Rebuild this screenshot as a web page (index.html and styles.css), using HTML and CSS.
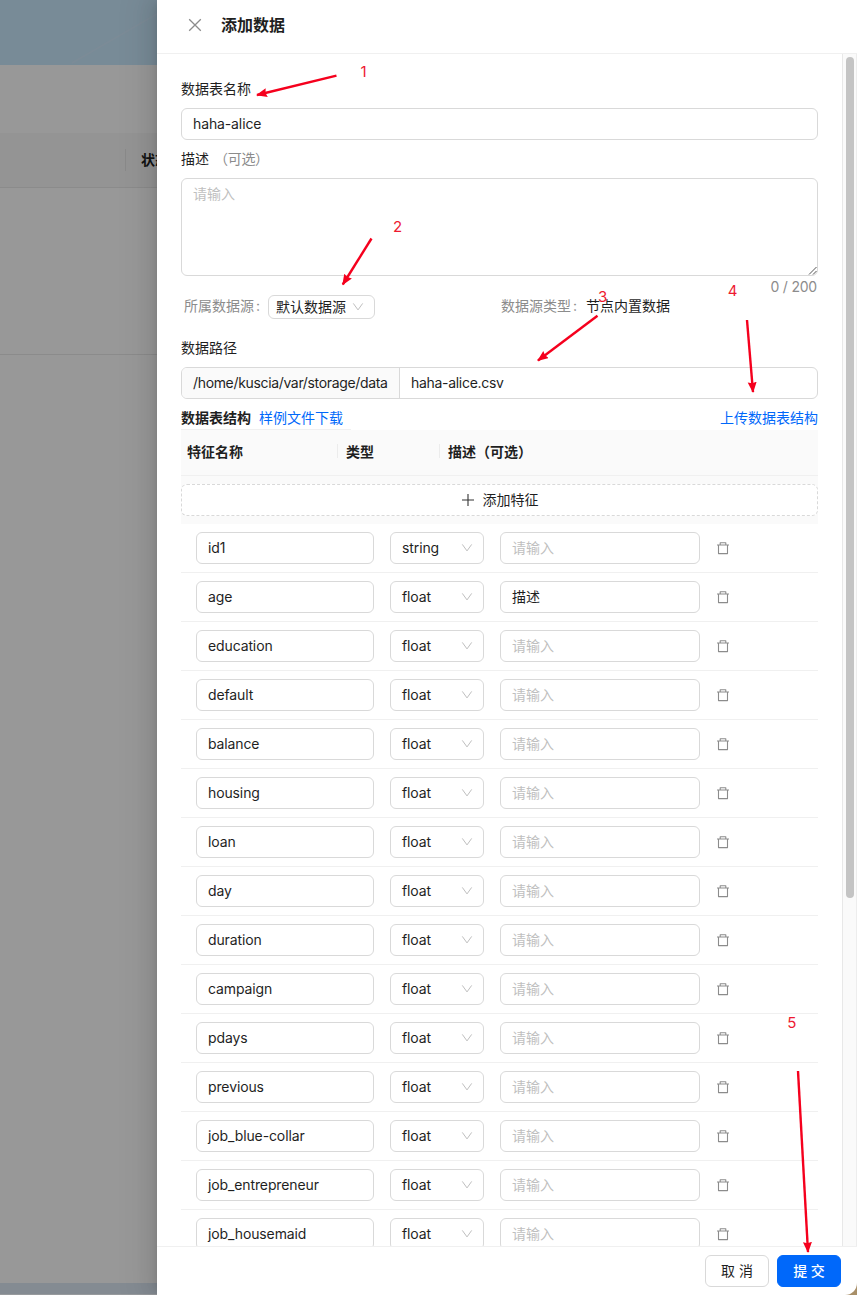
FILE: index.html
```html
<!DOCTYPE html>
<html lang="zh-CN">
<head>
<meta charset="utf-8">
<title>添加数据</title>
<link rel="stylesheet" href="styles.css">
</head>
<body>
<div class="screen">
  <aside class="backdrop">
    <div class="banner"><svg class="banner-line" width="157" height="65" viewBox="0 0 157 65"><path d="M72 63L157 14" fill="none" stroke="#808c97" stroke-width="1.5"/></svg></div>
    <div class="back-toolbar"></div>
    <div class="back-head"><i class="back-divider"></i><b class="back-title">状态</b></div>
    <div class="back-row"></div>
    <div class="back-rest"></div>
    <div class="back-foot"></div>
  </aside>
  <main class="drawer">
    <header class="drawer-header">
      <svg class="close" width="14" height="14" viewBox="0 0 14 14"><path d="M1.2 1.2L12.8 12.8M12.8 1.2L1.2 12.8" fill="none" stroke="#8c8c8c" stroke-width="1.3"/></svg>
      <h1 class="drawer-title">添加数据</h1>
    </header>
    <div class="drawer-body">
      <div class="form">
        <div class="label">数据表名称</div>
        <div class="input">haha-alice</div>
        <div class="label">描述<span class="optional">（可选）</span></div>
        <div class="textarea"><span class="placeholder">请输入</span>
          <svg class="grip" width="9" height="9" viewBox="0 0 9 9"><path d="M1 8.5L8.5 1M5 8.5L8.5 5" fill="none" stroke="#555" stroke-width="1"/></svg>
        </div>
        <div class="count">0 / 200</div>
        <div class="source">
          <div class="source-cell"><span class="source-text muted">所属数据源</span><span class="source-text colon muted">:</span>
            <div class="select small"><span>默认数据源</span><svg class="chevron" width="12" height="12" viewBox="0 0 12 12"><path d="M1.3 2.4L6 8.9L10.7 2.4" fill="none" stroke="#bfbfbf" stroke-width="1"/></svg></div>
          </div>
          <div class="source-cell"><span class="source-text muted">数据源类型</span><span class="source-text colon muted">:</span><span class="source-text source-kind">节点内置数据</span></div>
        </div>
        <div class="label path-label">数据路径</div>
        <div class="path"><span class="path-prefix">/home/kuscia/var/storage/data</span><span class="path-value">haha-alice.csv</span></div>
        <div class="structure"><div class="structure-left"><b class="strong">数据表结构</b><a class="link">样例文件下载</a></div><a class="link">上传数据表结构</a></div>
        <div class="thead"><span class="th th-name">特征名称</span><span class="th th-type">类型</span><span class="th th-desc">描述（可选）</span></div>
        <div class="add-row"><div class="add"><svg width="14" height="14" viewBox="0 0 14 14"><path d="M7 1V13M1 7H13" fill="none" stroke="#333" stroke-width="1.1"/></svg><span>添加特征</span></div></div>
        <div class="rows" id="rows"></div>
      </div>
      <div class="scrollbar"><div class="thumb"></div></div>
    </div>
    <div class="footer-wrap"><footer class="drawer-footer"><div class="button">取 消</div><div class="button primary">提 交</div></footer></div>
  </main>
  <svg class="notes" width="857" height="1295" viewBox="0 0 857 1295">
    <defs><marker id="head" markerUnits="userSpaceOnUse" markerWidth="12" markerHeight="10" refX="10" refY="4.5" orient="auto"><path d="M0 0L11 4.5L0 9L1.2 4.5Z" fill="#f5001d"/></marker></defs>
    <g class="arrows">
      <path d="M336.5 75.7L257 95"/>
      <path d="M371.5 238.5L342.8 284.5"/>
      <path d="M597.5 315.8L538 360.5"/>
      <path d="M747 320L753 392"/>
      <path d="M798 1071L808 1252"/>
    </g>
    <g class="numbers">
      <text x="363.5" y="77">1</text><text x="397.5" y="232">2</text><text x="602.7" y="302">3</text><text x="732.7" y="296">4</text><text x="791.7" y="1028">5</text>
    </g>
  </svg>
</div>
<script src="rows.js"></script>
</body>
</html>
```

FILE: styles.css
```css
* { box-sizing: border-box; }
body {
  margin: 0;
  overflow: hidden;
  font: 14px/22px Inter, "Noto Sans CJK SC", sans-serif;
  color: #1f1f1f;
}
.screen { position: relative; display: flex; width: 857px; height: 1295px; overflow: hidden; }

/* Dimmed page behind the drawer */
.backdrop { width: 157px; flex: none; display: flex; flex-direction: column; overflow: hidden; background: #989898; }
.banner { height: 65px; background: #788b97; }
.banner-line { display: block; opacity: .5; }
.back-toolbar { height: 68px; }
.back-head { height: 55px; display: flex; align-items: center; padding-left: 125px; background: #949494; border-bottom: 1px solid #8b8b8b; white-space: nowrap; }
.back-divider { width: 1px; height: 22px; flex: none; background: #8a8a8a; }
.back-title { flex: none; margin-left: 15px; font-weight: 600; color: #121212; }
.back-row { height: 167px; border-bottom: 1px solid #8b8b8b; }
.back-rest { flex: 1; }
.back-foot { height: 12px; background: #848b92; border-bottom: 1px solid #979a9d; }

/* Drawer */
.drawer {
  position: relative;
  width: 700px;
  display: flex;
  flex-direction: column;
  background: #fff;
  box-shadow: -6px 0 16px rgba(0,0,0,.08), -3px 0 6px -4px rgba(0,0,0,.12), -9px 0 28px 8px rgba(0,0,0,.05);
}
.drawer-header { height: 54px; flex: none; display: flex; align-items: center; gap: 19px; padding: 0 31px 3px; border-bottom: 1px solid #f0f0f0; }
.drawer-title { margin: 0; font-size: 16px; line-height: 24px; font-weight: 600; }
.drawer-body { flex: 1; min-height: 0; display: flex; overflow: hidden; }
.form { flex: 1; min-width: 0; padding: 16px 24px 0; }
.scrollbar { width: 15px; flex: none; padding: 3px 2px 0 3px; border-left: 1px solid #e8e8e8; border-right: 1px solid #ededed; background: #fafafa; }
.thumb { width: 8px; height: 841px; border-radius: 4px; background: #c4c4c4; }

.label { margin: 8px 0; height: 22px; }
.optional { margin-left: 5px; color: #8c8c8c; letter-spacing: -.3px; }
.input, .textarea, .select { border: 1px solid #d9d9d9; border-radius: 6px; background: #fff; }
.input { height: 32px; padding: 4px 11px; white-space: nowrap; letter-spacing: -.12px; }
.textarea { position: relative; height: 98px; padding: 4px 11px; }
.placeholder { color: #bfbfbf; letter-spacing: 0; }
.grip { position: absolute; right: 0; bottom: 0; }
.count { height: 22px; margin-bottom: -3px; padding-right: 1px; text-align: right; line-height: 21px; color: #8c8c8c; letter-spacing: -.2px; }
.muted { color: #8c8c8c; }
.source { display: flex; height: 24px; padding-left: 3px; }
.source-cell { width: 318px; display: flex; align-items: center; white-space: nowrap; }
.source-text { padding-bottom: 2px; }
.colon { width: 14px; padding-left: 2px; }
.source-kind { margin-left: 1px; }
.select { display: flex; align-items: center; justify-content: space-between; letter-spacing: -.1px; }
.small { width: 107px; height: 24px; padding: 0 10px 0 7px; letter-spacing: 0; }
.chevron { flex: none; }
.path-label { margin-top: 18px; }
.path { display: flex; height: 32px; border: 1px solid #d9d9d9; border-radius: 6px; overflow: hidden; line-height: 30px; letter-spacing: -.3px; }
.path-prefix { width: 218px; flex: none; padding-left: 11px; background: #fafafa; border-right: 1px solid #d9d9d9; white-space: nowrap; letter-spacing: -.34px; }
.path-value { padding-left: 11px; }
.structure { display: flex; justify-content: space-between; margin-top: 8px; height: 23px; }
.structure-left { display: flex; gap: 8px; width: 170px; border-bottom: 1px solid #f0f0f0; white-space: nowrap; }
.strong { font-weight: 600; }
.link { color: #0068fa; }

/* Feature table */
.thead { display: flex; height: 46px; padding: 11px 0 0 6px; background: #fafafa; border-bottom: 1px solid #f0f0f0; }
.th { position: relative; font-weight: 600; }
.th-name { width: 150px; }
.th-type { width: 102px; padding-left: 9px; }
.th-desc { padding-left: 9px; }
.th + .th::before { content: ""; position: absolute; left: 0; top: 3px; width: 1px; height: 14px; background: #ececec; }
.add-row { height: 48px; padding: 8px 0; background: #fafafa; }
.add { height: 32px; display: flex; align-items: center; justify-content: center; gap: 8px; border: 1px dashed #d9d9d9; border-radius: 6px; background: #fff; }
.row { display: grid; grid-template-columns: 178px 94px 200px 14px; gap: 0 16px; height: 49px; padding: 8px 0 0 15px; border-bottom: 1px solid #f0f0f0; }
.row .select { height: 32px; padding: 0 10px 0 11px; }
.trash { margin: 9px 0 0; }

/* Footer */
.footer-wrap { height: 49px; flex: none; background: #a88f68; }
.drawer-footer { height: 49px; display: flex; justify-content: flex-end; gap: 8px; padding: 8px 16px 0; border-top: 1px solid #f0f0f0; border-bottom-right-radius: 12px; background: #fff; }
.button { width: 64px; height: 32px; border: 1px solid #d9d9d9; border-radius: 6px; line-height: 30px; text-align: center; }
.primary { border-color: #0068fa; background: #0068fa; color: #fff; font-weight: 500; }

/* Step annotations */
.notes { position: absolute; left: 0; top: 0; pointer-events: none; }
.arrows path { fill: none; stroke: #f5001d; stroke-width: 2.4; stroke-linecap: butt; marker-end: url(#head); }
.numbers text { fill: #ee1a30; font-size: 15px; text-anchor: middle; }
```

FILE: rows.js
```js
const features = ['id1', 'age', 'education', 'default', 'balance', 'housing', 'loan', 'day',
  'duration', 'campaign', 'pdays', 'previous', 'job_blue-collar', 'job_entrepreneur', 'job_housemaid'];
const chevron = '<svg class="chevron" width="12" height="12" viewBox="0 0 12 12"><path d="M1.3 2.4L6 8.9L10.7 2.4" fill="none" stroke="#bfbfbf" stroke-width="1"/></svg>';
const trash = '<svg class="trash" width="14" height="14" viewBox="0 0 14 14"><path d="M1 4H13M4.2 3.7V1.8H9.8V3.7M2.5 4V12.6H11.5V4" fill="none" stroke="#8c8c8c" stroke-width="1.1" stroke-linejoin="round"/></svg>';
document.getElementById('rows').innerHTML = features.map((name, i) => `
  <div class="row">
    <div class="input">${name}</div>
    <div class="select"><span>${i ? 'float' : 'string'}</span>${chevron}</div>
    <div class="input">${i === 1 ? '描述' : '<span class="placeholder">请输入</span>'}</div>
    ${trash}
  </div>`).join('');
```
